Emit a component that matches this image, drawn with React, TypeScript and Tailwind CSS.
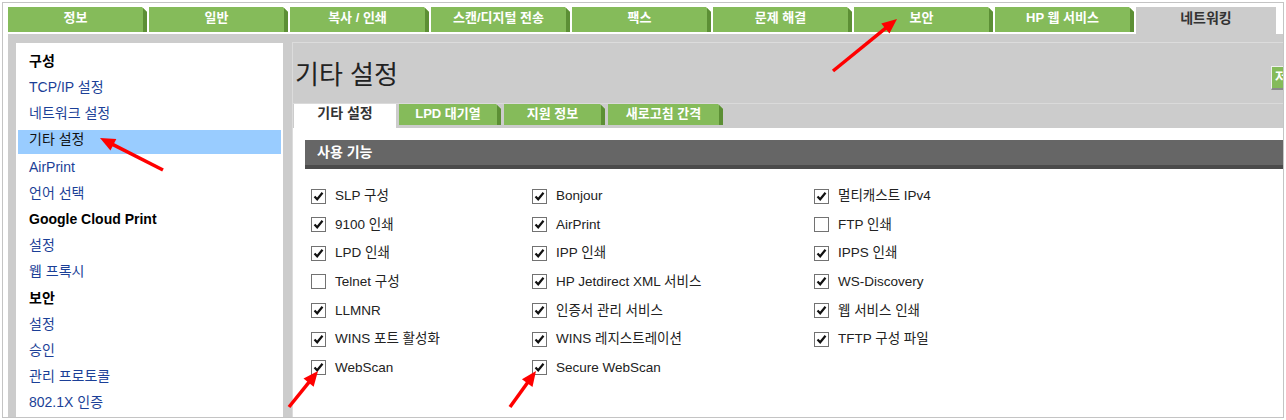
import React from 'react';

const topTabs = ['정보', '일반', '복사 / 인쇄', '스캔/디지털 전송', '팩스', '문제 해결', '보안', 'HP 웹 서비스'];

type NavItem = { label: string; kind: 'head' | 'link' | 'active' };

const navItems: NavItem[] = [
  { label: '구성', kind: 'head' },
  { label: 'TCP/IP 설정', kind: 'link' },
  { label: '네트워크 설정', kind: 'link' },
  { label: '기타 설정', kind: 'active' },
  { label: 'AirPrint', kind: 'link' },
  { label: '언어 선택', kind: 'link' },
  { label: 'Google Cloud Print', kind: 'head' },
  { label: '설정', kind: 'link' },
  { label: '웹 프록시', kind: 'link' },
  { label: '보안', kind: 'head' },
  { label: '설정', kind: 'link' },
  { label: '승인', kind: 'link' },
  { label: '관리 프로토콜', kind: 'link' },
  { label: '802.1X 인증', kind: 'link' },
];

// [label, checked]
const columns: [string, boolean][][] = [
  [
    ['SLP 구성', true],
    ['9100 인쇄', true],
    ['LPD 인쇄', true],
    ['Telnet 구성', false],
    ['LLMNR', true],
    ['WINS 포트 활성화', true],
    ['WebScan', true],
  ],
  [
    ['Bonjour', true],
    ['AirPrint', true],
    ['IPP 인쇄', true],
    ['HP Jetdirect XML 서비스', true],
    ['인증서 관리 서비스', true],
    ['WINS 레지스트레이션', true],
    ['Secure WebScan', true],
  ],
  [
    ['멀티캐스트 IPv4', true],
    ['FTP 인쇄', false],
    ['IPPS 인쇄', true],
    ['WS-Discovery', true],
    ['웹 서비스 인쇄', true],
    ['TFTP 구성 파일', true],
  ],
];

function TopTab({ label }: { label: string }) {
  return (
    <div className="flex h-[25px] w-[139px] items-start justify-center border-r-[4px] border-[#5c8f35] bg-[#85bb5a] pt-[2px] text-[13px] font-bold leading-[18px] text-white [clip-path:polygon(0_0,calc(100%-5px)_0,100%_5px,100%_100%,0_100%)]">
      {label}
    </div>
  );
}

function SubTab({ label, width }: { label: string; width: string }) {
  return (
    <div
      className={`flex h-[21px] ${width} items-start justify-center border-r-[4px] border-[#5c8f35] bg-[#85bb5a] pt-[1px] text-[13px] font-bold leading-[18px] text-white [clip-path:polygon(0_0,calc(100%-5px)_0,100%_5px,100%_100%,0_100%)]`}
    >
      {label}
    </div>
  );
}

function Check({ label, checked }: { label: string; checked: boolean }) {
  return (
    <div className="flex h-[28.67px] items-center">
      <div className="flex h-[15px] w-[15px] shrink-0 items-center justify-center border border-[#727272] bg-white">
        {checked && (
          <svg width="11" height="11" viewBox="0 0 11 11">
            <path d="M1.5 5.5 L4.2 8.3 L9.5 1.8" fill="none" stroke="#111" strokeWidth="2.2" />
          </svg>
        )}
      </div>
      <span className="ml-[9px] whitespace-nowrap text-[13.5px] text-[#222]">{label}</span>
    </div>
  );
}

function Arrow({ x1, y1, x2, y2 }: { x1: number; y1: number; x2: number; y2: number }) {
  const dx = x2 - x1;
  const dy = y2 - y1;
  const len = Math.hypot(dx, dy);
  const ux = dx / len;
  const uy = dy / len;
  const head = 15;
  const half = 6.5;
  const bx = x2 - ux * head;
  const by = y2 - uy * head;
  const pts = `${x2},${y2} ${bx - uy * half},${by + ux * half} ${bx + uy * half},${by - ux * half}`;
  return (
    <g>
      <line x1={x1} y1={y1} x2={bx + ux * 2} y2={by + uy * 2} stroke="#ff0000" strokeWidth={3.5} />
      <polygon points={pts} fill="#ff0000" />
    </g>
  );
}

export default function App() {
  return (
    <div className="relative h-[420px] w-[1286px] overflow-hidden bg-white pl-[2px] pt-[2px] font-['Liberation_Sans','Noto_Sans_CJK_KR',sans-serif]">
      <div className="flex h-[416px] w-[1282px] flex-col overflow-hidden border border-[#c4c4c4]">
        {/* top tabs */}
        <div className="ml-[5px] mt-[4px] flex h-[27px] shrink-0 items-start gap-[2px]">
          {topTabs.map((t) => (
            <TopTab key={t} label={t} />
          ))}
          <div className="flex h-[27px] w-[140px] items-start justify-center bg-[#cccccc] pt-[2px] text-[14px] font-bold leading-[18px] text-[#333]">
            네트워킹
          </div>
        </div>

        {/* gray body */}
        <div className="ml-[5px] flex min-h-0 w-[1320px] flex-1 bg-[#cccccc] pl-[8px] pt-[8px]">
          {/* sidebar */}
          <div className="mt-[1px] w-[267px] shrink-0 self-stretch bg-white pt-[5px] text-[14px]">
            {navItems.map((item, i) =>
              item.kind === 'active' ? (
                <div key={i} className="mx-[2px] mt-[3px] h-[24px] bg-[#99ccff] pl-[11px] leading-[18px] text-[#111]">
                  {item.label}
                </div>
              ) : (
                <div
                  key={i}
                  className={`h-[26.2px] pl-[13px] leading-[26.2px] ${
                    item.kind === 'head' ? 'font-bold text-black' : 'text-[#1b3f97]'
                  }`}
                >
                  {item.label}
                </div>
              )
            )}
          </div>

          {/* main panel */}
          <div className="ml-[9px] flex min-w-0 flex-1 flex-col border-l border-t border-[#dcdcdc]">
            <div className="flex h-[60px] shrink-0 items-start justify-between">
              <h1 className="pl-[2px] pt-[17px] text-[26px] leading-[30px] text-[#222]">기타 설정</h1>
              <div className="mr-[12px] mt-[23px] h-[24px] w-[45px] border-l border-t border-b-2 border-l-[#f0f0f0] border-t-[#f0f0f0] border-b-[#8a8a8a] bg-[#85bb5a] pl-[3px] text-[13px] font-bold leading-[20px] text-white">
                저장
              </div>
            </div>

            <div className="flex h-[25px] shrink-0 items-start gap-[3px] border-t border-[#dadada] pl-[1px]">
              <div className="flex h-[24px] w-[102px] items-start justify-center bg-white text-[14px] font-bold leading-[18px] text-[#333]">
                기타 설정
              </div>
              <SubTab label="LPD 대기열" width="w-[102px]" />
              <SubTab label="지원 정보" width="w-[101px]" />
              <SubTab label="새로고침 간격" width="w-[115px]" />
            </div>

            <div className="flex-1 bg-white pl-[12px] pt-[12px]">
              <div className="h-[29px] border-b-[4px] border-[#4b4b4b] bg-[#666666] pl-[12px] text-[14px] font-bold leading-[25px] text-white">
                사용 기능
              </div>
              <div className="mt-[12.7px] grid grid-cols-[221px_282px_1fr] pl-[6px]">
                {columns.map((col, ci) => (
                  <div key={ci} className="flex flex-col">
                    {col.map(([label, checked]) => (
                      <Check key={label} label={label} checked={checked} />
                    ))}
                  </div>
                ))}
              </div>
            </div>
          </div>
        </div>
      </div>

      {/* red annotation arrows */}
      <svg className="pointer-events-none absolute left-0 top-0" width="1286" height="420">
        <Arrow x1={833} y1={71} x2={897} y2={19} />
        <Arrow x1={163} y1={170} x2={100} y2={138} />
        <Arrow x1={289} y1={407} x2={318} y2={371} />
        <Arrow x1={510} y1={407} x2={536} y2={371} />
      </svg>
    </div>
  );
}
